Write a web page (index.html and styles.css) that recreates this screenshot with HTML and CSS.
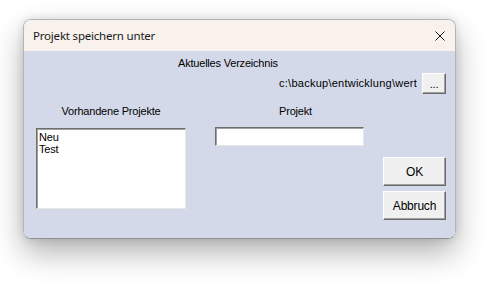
FILE: index.html
```html
<!DOCTYPE html>
<html lang="de">
<head>
<meta charset="utf-8">
<title>Projekt speichern unter</title>
<link rel="stylesheet" href="styles.css">
</head>
<body>
<div class="window">
  <div class="titlebar">
    <span class="title">Projekt speichern unter</span>
    <svg class="close" width="10" height="10" viewBox="0 0 10 10"><path d="M0.5 0.5 L9.5 9.5 M9.5 0.5 L0.5 9.5" stroke="#1a1a1a" stroke-width="1" fill="none"/></svg>
  </div>
  <div class="client">
    <div class="cur-label">Aktuelles Verzeichnis</div>
    <div class="path-row">
      <span class="path">c:\backup\entwicklung\wert</span>
      <button class="btn btn-browse">...</button>
    </div>
    <div class="main">
      <div class="col col-list">
        <div class="label">Vorhandene Projekte</div>
        <div class="listbox">
          <div class="item">Neu</div>
          <div class="item">Test</div>
        </div>
      </div>
      <div class="col col-edit">
        <div class="label label-proj">Projekt</div>
        <div class="edit"></div>
      </div>
      <div class="col col-btns">
        <button class="btn btn-big">OK</button>
        <button class="btn btn-big">Abbruch</button>
      </div>
    </div>
  </div>
</div>
</body>
</html>
```
FILE: styles.css
```css
html, body {
  margin: 0;
  padding: 0;
  background: #ffffff;
}
body {
  width: 495px;
  height: 286px;
  overflow: hidden;
  padding-top: 19px;
  padding-left: 23px;
  box-sizing: border-box;
}
.window {
  width: 433px;
  height: 220px;
  box-sizing: border-box;
  border: 1px solid #b4b4b4;
  border-bottom-color: #8e8e8e;
  border-radius: 8px;
  overflow: hidden;
  box-shadow: 0 14px 30px rgba(0,0,0,0.3), 0 0 10px rgba(0,0,0,0.12);
  display: flex;
  flex-direction: column;
}
.titlebar {
  height: 31px;
  flex: none;
  background: #f8f1ec;
  display: flex;
  align-items: center;
  justify-content: space-between;
  padding: 0 10px 0 9px;
}
.title {
  font-family: "Noto Sans", sans-serif;
  font-size: 11.5px;
  color: #1a1a1a;
  letter-spacing: -0.2px;
}
.close {
  display: block;
}
.client {
  flex: 1;
  background: #d4d9e9;
  padding: 6px 9px 0 12px;
  font-family: "Liberation Sans", Arial, sans-serif;
  font-size: 11px;
  letter-spacing: -0.2px;
  color: #000;
  line-height: 13px;
}
.cur-label {
  padding-left: 142px;
}
.path-row {
  display: flex;
  justify-content: flex-end;
  align-items: center;
  gap: 5px;
  margin-top: 3px;
}
.path {
  letter-spacing: 0.25px;
}
.btn {
  font-family: "Liberation Sans", Arial, sans-serif;
  font-size: 11px;
  letter-spacing: -0.2px;
  color: #000;
  background: #f0f0f0;
  box-sizing: border-box;
  border: 1px solid;
  border-color: #ffffff #696969 #696969 #ffffff;
  box-shadow: inset -1px -1px 0 #a0a0a0;
  padding: 0;
  margin: 0;
  display: flex;
  align-items: center;
  justify-content: center;
}
.btn-browse {
  width: 24px;
  height: 21px;
}
.main {
  display: flex;
  margin-top: 11px;
}
.col {
  display: flex;
  flex-direction: column;
}
.col-list {
  width: 150px;
}
.col-edit {
  width: 149px;
  margin-left: 29px;
}
.col-btns {
  width: 63px;
  margin-left: 19px;
  padding-top: 52px;
  gap: 5px;
}
.label {
  text-align: center;
  margin-bottom: 10px;
}
.label-proj {
  padding-left: 12px;
  margin-bottom: 9px;
}
.listbox {
  height: 81px;
  box-sizing: border-box;
  background: #ffffff;
  border: 1px solid;
  border-color: #6e6e6e #e6e6e6 #e6e6e6 #6e6e6e;
  box-shadow: inset 1px 1px 0 #a0a0a0;
  padding: 2px 2px;
  line-height: 12px;
}
.edit {
  height: 19px;
  box-sizing: border-box;
  background: #ffffff;
  border: 1px solid;
  border-color: #6e6e6e #e6e6e6 #e6e6e6 #6e6e6e;
  box-shadow: inset 1px 1px 0 #a0a0a0;
}
.btn-big {
  width: 63px;
  height: 29px;
  font-size: 12px;
}
```
